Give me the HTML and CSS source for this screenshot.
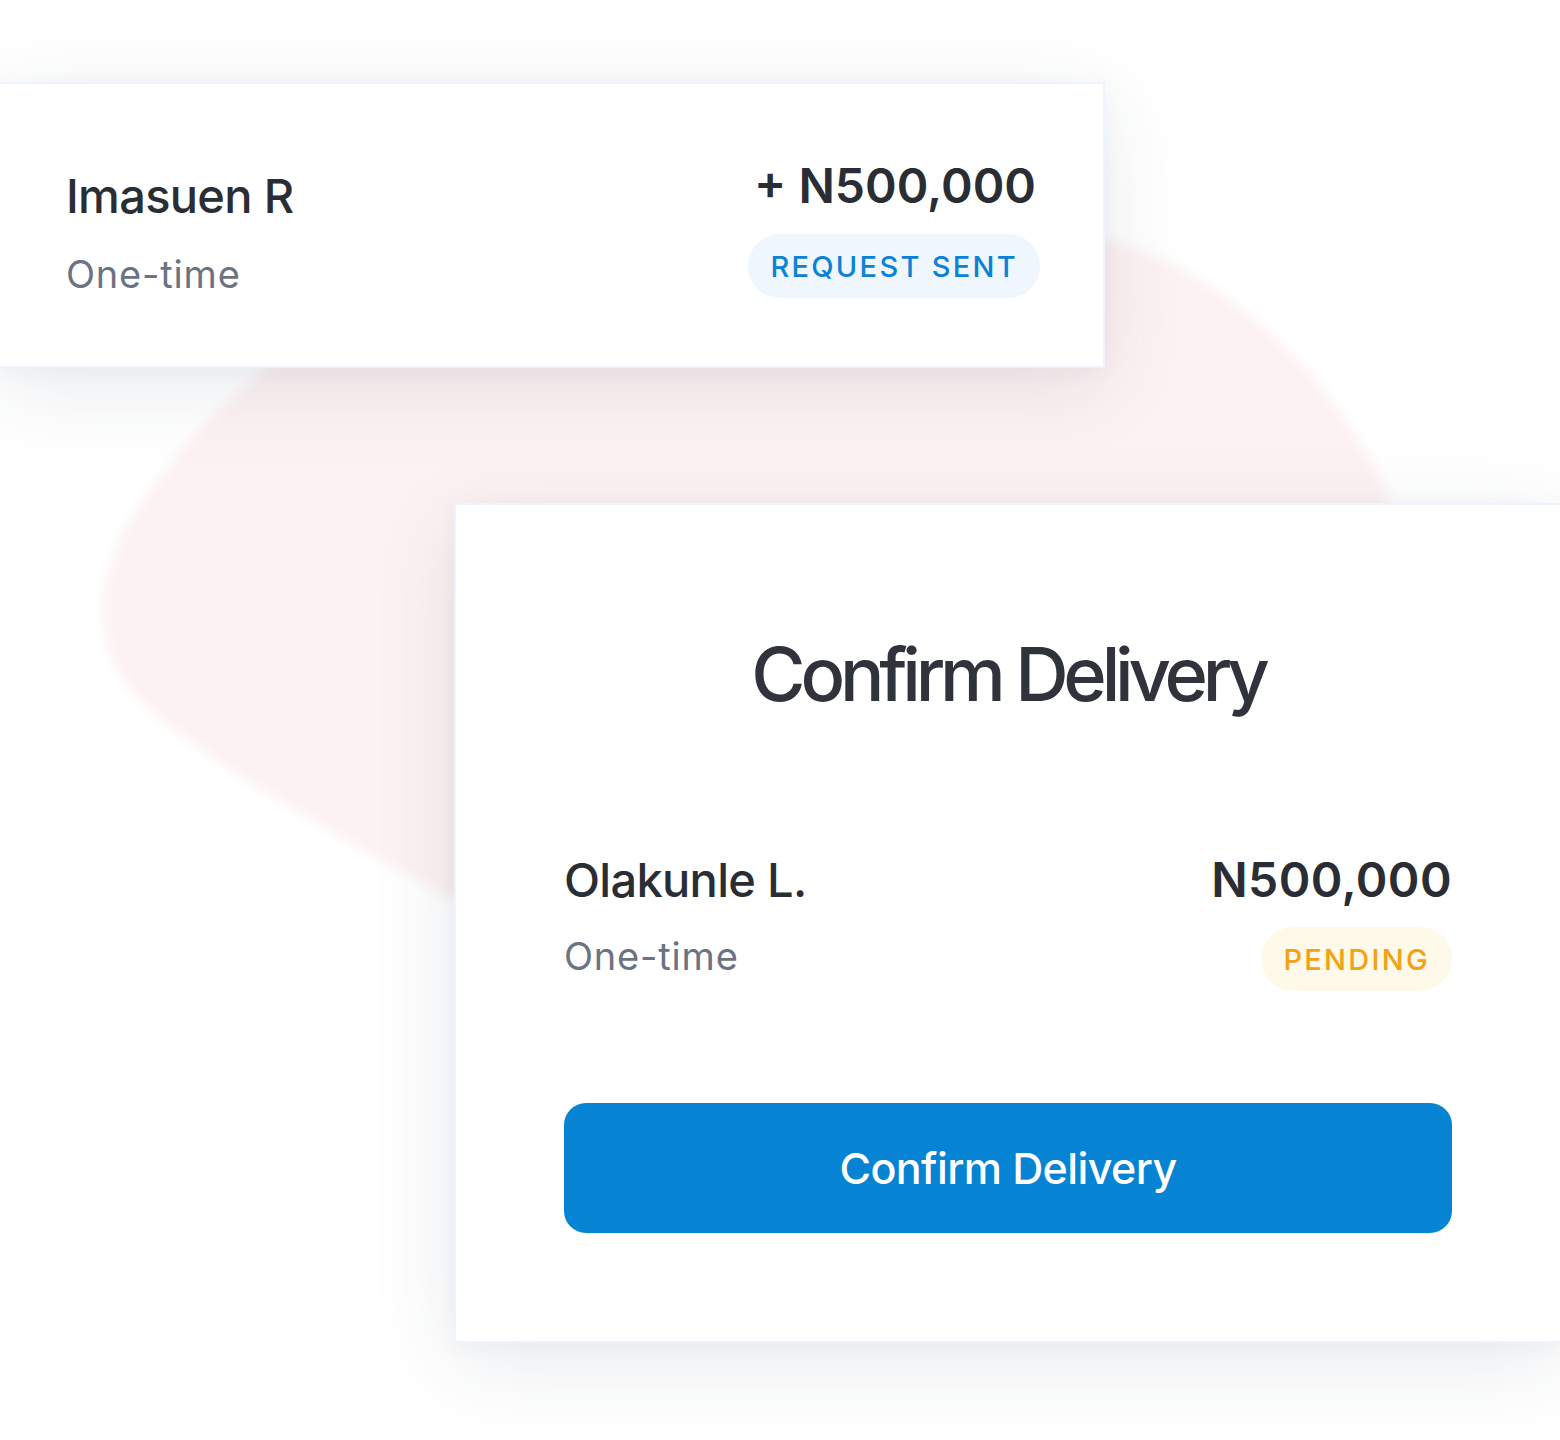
FILE: index.html
```html
<!DOCTYPE html>
<html lang="en">
<head>
<meta charset="utf-8">
<title>Confirm Delivery</title>
<link rel="stylesheet" href="styles.css">
</head>
<body>
<div class="stage">
  <svg class="blob" width="1560" height="1440" viewBox="0 0 1560 1440" aria-hidden="true">
    <defs>
      <filter id="soft" x="-20%" y="-20%" width="140%" height="140%">
        <feGaussianBlur stdDeviation="6"/>
      </filter>
    </defs>
    <path d="M1090 235 C1200 255 1330 360 1390 500 L1330 560 L450 900 C330 830 200 760 140 700 C90 650 95 580 130 520 C180 440 260 360 330 330 L1000 240 C1030 236 1060 232 1090 235 Z" fill="#fdf2f2" filter="url(#soft)"/>
  </svg>

  <section class="card card-request">
    <div class="col col-start">
      <div class="name">Imasuen R</div>
      <div class="sub">One-time</div>
    </div>
    <div class="col col-end">
      <div class="amount">+ N500,000</div>
      <span class="badge badge-blue">REQUEST SENT</span>
    </div>
  </section>

  <section class="card card-confirm">
    <h1 class="title">Confirm Delivery</h1>
    <div class="row">
      <div class="col">
        <div class="name">Olakunle L.</div>
        <div class="sub">One-time</div>
      </div>
      <div class="col col-end">
        <div class="amount">N500,000</div>
        <span class="badge badge-amber">PENDING</span>
      </div>
    </div>
    <button class="btn" type="button">Confirm Delivery</button>
  </section>
</div>
</body>
</html>
```

FILE: styles.css
```css
html, body {
  margin: 0;
  padding: 0;
  background: #ffffff;
}

body {
  width: 1560px;
  height: 1440px;
  overflow: hidden;
  font-family: Inter, "Noto Sans", "Liberation Sans", sans-serif;
  color: #2b2e35;
}

.stage {
  position: relative;
  width: 1560px;
  height: 1440px;
  padding-top: 82px;
  box-sizing: border-box;
  overflow: hidden;
}

.blob {
  position: absolute;
  left: 0;
  top: 0;
  z-index: 0;
}

.card {
  position: relative;
  z-index: 1;
  background: #ffffff;
  border: 2px solid #eef4fb;
  box-sizing: border-box;
  box-shadow: 0 20px 80px rgba(40, 55, 90, 0.10), 0 4px 20px rgba(40, 55, 90, 0.04);
}

.card-request {
  width: 1107px;
  height: 286px;
  margin-left: -2px;
  display: flex;
  justify-content: space-between;
  align-items: center;
  padding: 0 63px 0 66px;
}

.col {
  display: flex;
  flex-direction: column;
}

.col-end {
  align-items: flex-end;
}

.card-request .col-start {
  margin-top: 14px;
}

.card-request .col-end {
  margin-top: 6px;
}

.card-request .amount {
  margin-right: 4px;
}

.name {
  font-size: 47px;
  font-weight: 500;
  letter-spacing: -0.7px;
  line-height: 56px;
  color: #2a2d33;
}

.sub {
  font-size: 38px;
  font-weight: 400;
  letter-spacing: 0.8px;
  line-height: 44px;
  color: #6b7282;
  margin-top: 28px;
}

.amount {
  font-size: 48px;
  font-weight: 600;
  letter-spacing: 0;
  line-height: 56px;
  color: #2a2d33;
}

.badge {
  display: inline-flex;
  align-items: center;
  justify-content: center;
  height: 64px;
  padding: 0 22px;
  border-radius: 32px;
  font-size: 29px;
  font-weight: 500;
  letter-spacing: 2.3px;
  margin-top: 20px;
}

.badge-blue {
  background: #eff6fe;
  color: #0b82d4;
}

.badge-amber {
  background: #fef9e9;
  color: #f4a012;
}

.card-confirm {
  width: 1108px;
  height: 840px;
  margin-left: 454px;
  margin-top: 135px;
  padding: 0 108px 0 108px;
  display: flex;
  flex-direction: column;
}

.title {
  margin: 124px 0 0 0;
  text-align: center;
  font-size: 74px;
  font-weight: 500;
  letter-spacing: -5.2px;
  line-height: 90px;
  color: #30333b;
}

.row {
  display: flex;
  justify-content: space-between;
  align-items: flex-start;
  margin-top: 133px;
}

.card-confirm .sub {
  margin-top: 26px;
}

.card-confirm .amount {
  letter-spacing: 0.4px;
}

.card-confirm .badge {
  margin-top: 19px;
}

.btn {
  margin-top: 112px;
  height: 130px;
  width: 100%;
  border: none;
  border-radius: 22px;
  background: #0783d3;
  color: #ffffff;
  font-family: Inter, "Noto Sans", "Liberation Sans", sans-serif;
  font-size: 43px;
  font-weight: 500;
  letter-spacing: -0.6px;
  cursor: pointer;
}
```
